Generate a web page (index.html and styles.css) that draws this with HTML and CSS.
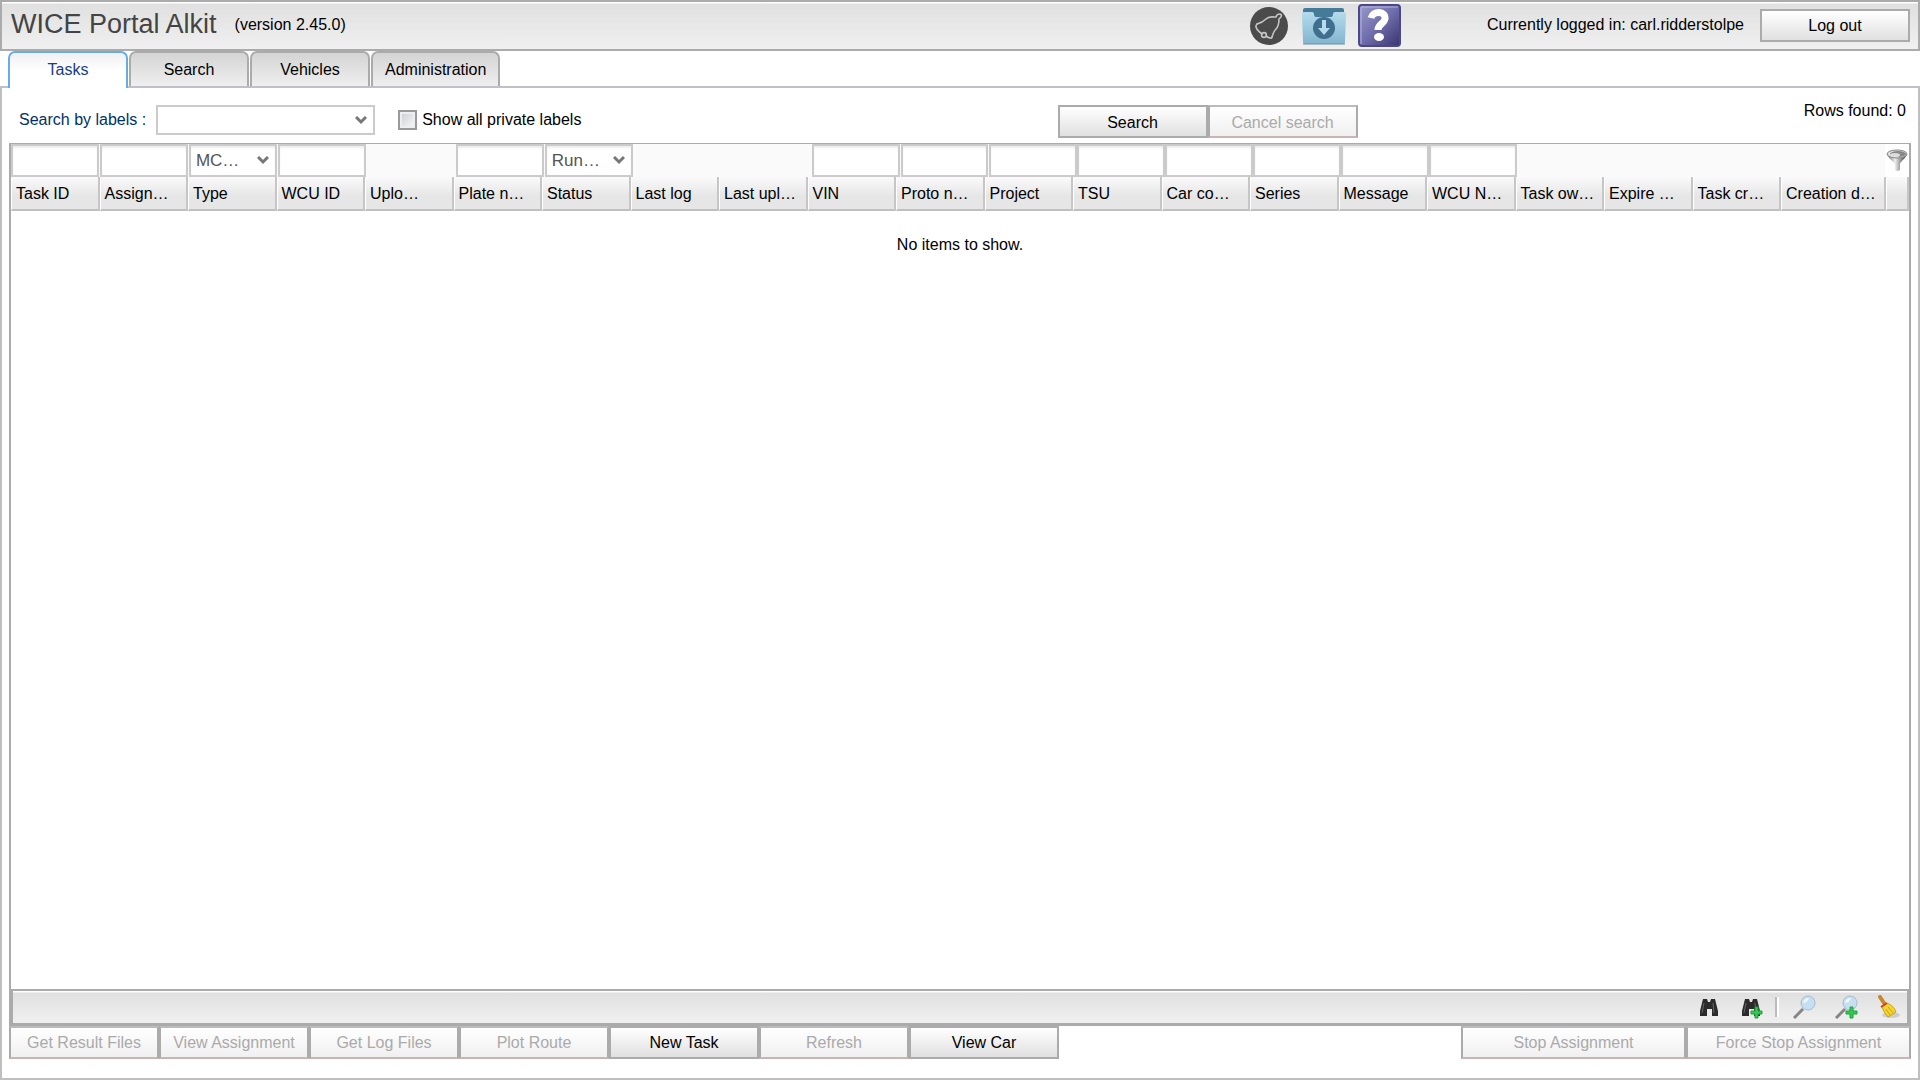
FILE: index.html
```html
<!DOCTYPE html>
<html lang="en">
<head>
<meta charset="UTF-8">
<meta name="viewport" content="width=device-width, initial-scale=1.0">
<title>WICE Portal Alkit</title>
<link rel="stylesheet" href="styles.css">
</head>
<body>

<header class="topbar">
  <h1 class="title">WICE Portal Alkit</h1>
  <span class="version">(version 2.45.0)</span>
  <div class="tools">
    <button class="tool" aria-label="Notifications">
      <svg width="38" height="38" viewBox="0 0 38 38">
        <circle cx="19" cy="19" r="19" fill="#4b4b4b"/>
        <g fill="none" stroke="#c4c4c4" stroke-width="1.6" stroke-linejoin="round" stroke-linecap="round">
          <path d="M7 17 C11 16 13 15 16 12 C19 9 23 10 26 10 C27 6 33 6 31 10 L29 12 C29 16 29 19 26 22 C23 25 23 27 22 30"/>
          <path d="M7 17 C4 20 8 24 12 27 M16 29 C19 31 22 32 22 30"/>
          <circle cx="14" cy="28" r="2.4"/>
        </g>
      </svg>
    </button>
    <button class="tool" aria-label="Downloads">
      <svg width="46" height="40" viewBox="0 0 46 40">
        <defs>
          <linearGradient id="folder" x1="0" y1="0" x2="0" y2="1">
            <stop offset="0" stop-color="#b4dbed"/>
            <stop offset="1" stop-color="#82b5ce"/>
          </linearGradient>
        </defs>
        <path d="M3 4 Q3 2 5 2 H42 Q44 2 44 4 V14 H3Z" fill="#457a99"/>
        <path d="M2 8 Q2 6 4 6 H12 Q14 6 14 8 Q14 11 16 11 H31 Q33 11 33 8 Q33 6 35 6 H44 Q46 6 46 8 L45 36 Q45 38 43 38 H5 Q3 38 3 36Z" fill="url(#folder)"/>
        <path d="M3 38 H45" stroke="#6a8fa3"/>
        <circle cx="24" cy="22" r="11" fill="#3f6f8d"/>
        <path d="M22 14 H26 V22 H30 L24 29 L18 22 H22Z" fill="#b5dcee"/>
      </svg>
    </button>
    <button class="tool" aria-label="Help">
      <svg width="44" height="44" viewBox="0 0 44 44">
        <defs>
          <linearGradient id="help" x1="0" y1="0" x2="1" y2="1">
            <stop offset="0" stop-color="#9a9acb"/>
            <stop offset=".5" stop-color="#6f6dab"/>
            <stop offset="1" stop-color="#38346f"/>
          </linearGradient>
        </defs>
        <rect x="1" y="1" width="41" height="41" rx="3" fill="url(#help)" stroke="#4c4787" stroke-width="2"/>
        <path d="M3 40 V3 H40" fill="none" stroke="#b4b4dc"/>
        <path d="M13 14 C15 6 28 7 27 15 C26 20 20 20 20 26" fill="none" stroke="#fff" stroke-width="7"/>
        <ellipse cx="21" cy="33" rx="5" ry="4" fill="#fff"/>
      </svg>
    </button>
  </div>
  <span class="user">Currently logged in: carl.ridderstolpe</span>
  <button class="btn logout">Log out</button>
</header>

<nav class="tabs">
  <button class="tab selected">Tasks</button>
  <button class="tab">Search</button>
  <button class="tab">Vehicles</button>
  <button class="tab">Administration</button>
</nav>

<main class="pane">
  <form class="search" onsubmit="return false">
    <label class="search-label" for="labels">Search by labels :</label>
    <select class="select labels" id="labels"><option></option></select>
    <input class="check" type="checkbox" id="private">
    <label for="private">Show all private labels</label>
    <div class="search-buttons">
      <button class="btn">Search</button><button class="btn" disabled>Cancel search</button>
    </div>
    <span class="rows">Rows found: 0</span>
  </form>

  <div class="list">
    <table class="grid">
      <thead>
        <tr class="filters">
          <td><input class="filter" aria-label="Task ID"></td>
          <td><input class="filter" aria-label="Assignment"></td>
          <td><select class="select filter" aria-label="Type"><option>MC…</option></select></td>
          <td><input class="filter" aria-label="WCU ID"></td>
          <td></td>
          <td><input class="filter" aria-label="Plate number"></td>
          <td><select class="select filter" aria-label="Status"><option>Run…</option></select></td>
          <td></td>
          <td></td>
          <td><input class="filter" aria-label="VIN"></td>
          <td><input class="filter" aria-label="Proto number"></td>
          <td><input class="filter" aria-label="Project"></td>
          <td><input class="filter" aria-label="TSU"></td>
          <td><input class="filter" aria-label="Car config"></td>
          <td><input class="filter" aria-label="Series"></td>
          <td><input class="filter" aria-label="Message"></td>
          <td><input class="filter" aria-label="WCU Name"></td>
          <td></td>
          <td></td>
          <td></td>
          <td></td>
          <td class="filter-cell">
            <button class="tool" aria-label="Filter">
              <svg width="22" height="24" viewBox="0 0 22 24">
                <defs>
                  <linearGradient id="funnel">
                    <stop offset="0" stop-color="#666"/>
                    <stop offset=".4" stop-color="#eee"/>
                    <stop offset="1" stop-color="#333"/>
                  </linearGradient>
                </defs>
                <path d="M1 5 C2 9 7 12 9 15 V21 Q11 23 14 21 V15 C15 12 20 9 21 5Z" fill="url(#funnel)"/>
                <ellipse cx="11" cy="5" rx="10" ry="4" fill="#ddd" stroke="#888"/>
                <ellipse cx="12" cy="5" rx="8" ry="3" fill="#888"/>
                <ellipse cx="9" cy="6" rx="5" ry="2" fill="#ddd"/>
              </svg>
            </button>
          </td>
        </tr>
        <tr class="headers">
          <th>Task ID</th>
          <th>Assign…</th>
          <th>Type</th>
          <th>WCU ID</th>
          <th>Uplo…</th>
          <th>Plate n…</th>
          <th>Status</th>
          <th>Last log</th>
          <th>Last upl…</th>
          <th>VIN</th>
          <th>Proto n…</th>
          <th>Project</th>
          <th>TSU</th>
          <th>Car co…</th>
          <th>Series</th>
          <th>Message</th>
          <th>WCU N…</th>
          <th>Task ow…</th>
          <th>Expire …</th>
          <th>Task cr…</th>
          <th>Creation d…</th>
          <th></th>
        </tr>
      </thead>
      <tbody>
        <tr><td class="empty">No items to show.</td></tr>
      </tbody>
    </table>

    <div class="strip">
      <button class="tool" aria-label="Find">
        <svg width="24" height="24" viewBox="0 0 24 24">
          <g id="binoculars">
            <path d="M5 4 H9 L10 7 H12 L13 4 H17 L18 8 L20 16 V21 H14 V14 H9 V21 H2 V16 L4 8Z" fill="#2b2b2b"/>
            <path d="M6 8 L4 18 M15 8 L16 18" stroke="#666"/>
          </g>
        </svg>
      </button>
      <button class="tool" aria-label="Find and add">
        <svg width="24" height="24" viewBox="0 0 24 24">
          <use href="#binoculars"/>
          <path id="plus" d="M15 12 H18 V16 H22 V19 H18 V23 H15 V19 H11 V16 H15Z" fill="#35c653" stroke="#1fa53b"/>
        </svg>
      </button>
      <span class="separator"></span>
      <button class="tool" aria-label="Zoom">
        <svg width="24" height="24" viewBox="0 0 24 24">
          <g id="lens">
            <path d="M1 23 L10 14" stroke="#858585" stroke-width="3"/>
            <circle cx="15" cy="8" r="7" fill="#c6dff3" stroke="#a6bccd"/>
            <path d="M10 8 Q11 3 16 3 Q14 8 10 8Z" fill="#f2f8fd"/>
          </g>
        </svg>
      </button>
      <button class="tool" aria-label="Zoom and add">
        <svg width="24" height="24" viewBox="0 0 24 24">
          <use href="#lens"/>
          <use href="#plus"/>
        </svg>
      </button>
      <button class="tool" aria-label="Clear">
        <svg width="24" height="24" viewBox="0 0 24 24">
          <ellipse cx="14" cy="20" rx="9" ry="3" fill="#ccc"/>
          <path d="M3 2 L7 8" stroke="#c58a2c" stroke-width="4" stroke-linecap="round"/>
          <path d="M5 12 L10 8 Q17 11 19 17 L11 22 Q7 18 5 12Z" fill="#f3d62c" stroke="#c9a218"/>
          <path d="M9 14 L13 20 M11 12 L16 18" stroke="#c9a218"/>
          <path d="M4 12 L10 8" stroke="#d2401f" stroke-width="2"/>
        </svg>
      </button>
    </div>
  </div>

  <div class="actions">
    <button class="btn" disabled>Get Result Files</button>
    <button class="btn" disabled>View Assignment</button>
    <button class="btn" disabled>Get Log Files</button>
    <button class="btn" disabled>Plot Route</button>
    <button class="btn">New Task</button>
    <button class="btn" disabled>Refresh</button>
    <button class="btn">View Car</button>
    <span class="spacer"></span>
    <button class="btn wide" disabled>Stop Assignment</button>
    <button class="btn wide" disabled>Force Stop Assignment</button>
  </div>
</main>

</body>
</html>
```
FILE: styles.css
```css
* {
  box-sizing: border-box;
}
body {
  margin: 0;
  height: 100vh;
  display: flex;
  flex-direction: column;
  font-family: Arial, "Liberation Sans", sans-serif;
  font-size: 16px;
  color: #000;
  background: #fff;
}
button, input, select {
  font: inherit;
  margin: 0;
}
svg {
  display: block;
}

/* top bar */
.topbar {
  display: flex;
  align-items: center;
  height: 51px;
  padding: 0 8px 0 9px;
  border: 2px solid #ababab;
  background: linear-gradient(#fff 1px, #e0e0e0 2px, #f0f0f0);
}
.title {
  margin: 0 18px 2px 0;
  font-size: 27px;
  font-weight: normal;
  color: #444;
}
.version {
  flex: 1;
}
.version, .user {
  padding-bottom: 2px;
}
.tools {
  display: flex;
  align-items: center;
  gap: 12px;
  margin-right: 85px;
}
.tool {
  padding: 0;
  border: 0;
  background: none;
}
.user {
  margin-right: 16px;
}
.btn {
  width: 150px;
  height: 33px;
  padding: 1px 0 0;
  border: 2px solid #ababab;
  background: linear-gradient(#fff, #e0e0e0);
  color: #000;
}
.btn:disabled {
  border-color: #bbb #ababab #c9b5b5;
  background: linear-gradient(#fff, #f0f0f0);
  color: #aaa;
}

/* tabs */
.tabs {
  display: flex;
  gap: 1px;
  height: 35px;
  padding-left: 8px;
}
.tab {
  min-width: 120px;
  padding: 0 12px;
  border: 2px solid #ababab;
  border-bottom: 0;
  border-radius: 7px 7px 0 0;
  background: linear-gradient(#d4d4d4, #efefef);
  color: #000;
}
.tab.selected {
  margin-bottom: -2px;
  padding-bottom: 2px;
  border-color: #66ade8;
  background: linear-gradient(#f0f0f0, #fff 50%);
  color: #1a3a8a;
  z-index: 1;
}

/* pane */
.pane {
  flex: 1;
  display: flex;
  flex-direction: column;
  padding: 0 7px 19px;
  border: 2px solid #bfbfbf;
  border-top-color: #c0c0c8;
}
.search {
  display: flex;
  align-items: flex-start;
  height: 55px;
  padding: 17px 5px 0 10px;
  line-height: 30px;
}
.search-label {
  margin-right: 10px;
  color: #003168;
}
.select {
  appearance: none;
  padding: 0 5px;
  border: 2px solid #cbcbcb;
  border-radius: 0;
  color: #555;
  background: #fff url("data:image/svg+xml,%3Csvg xmlns='http://www.w3.org/2000/svg' width='12' height='9'%3E%3Cpath d='M1 1L6 6L11 1' fill='none' stroke='%23777' stroke-width='3'/%3E%3C/svg%3E") no-repeat right 6px center;
}
.labels {
  width: 219px;
  height: 30px;
  margin-right: 23px;
}
.check {
  appearance: none;
  width: 19px;
  height: 20px;
  margin: 5px 5px 0 0;
  border: 2px solid #999;
  background: linear-gradient(135deg, #c8ccd2, #fafafa);
  box-shadow: inset 0 0 0 2px #eee;
}
.search-buttons {
  display: flex;
  flex: 1;
  justify-content: center;
  padding-left: 30px;
}
.rows {
  line-height: 12px;
}

/* list grid */
.list {
  flex: 1;
  display: flex;
  flex-direction: column;
  border: 2px solid #ababab;
  border-top-width: 1px;
}
.grid, .grid thead, .grid tbody {
  display: block;
}
.grid {
  flex: 1;
}
.filters, .headers {
  display: grid;
}
.filters {
  grid-template-columns: repeat(11, 89fr) repeat(9, 88fr) 104fr 24px;
  height: 33px;
  background: #fafafa;
}
.filters td {
  display: flex;
  min-width: 0;
  padding: 0;
}
.filters td:nth-child(-n+11) {
  padding-right: 1px;
}
.filters .filter-cell {
  align-items: center;
  justify-content: center;
  background: #fff;
}
.filter {
  width: 100%;
  height: 33px;
  border: 2px solid #cbcbcb;
  box-shadow: inset 0 2px 2px #eee;
  font-size: 17px;
}
.headers {
  grid-template-columns: repeat(20, 1fr) 105px 23px;
  height: 34px;
}
.headers th {
  min-width: 0;
  padding: 0 4px;
  overflow: hidden;
  border-left: 1px solid #fff;
  border-right: 2px solid #c6c6c6;
  border-bottom: 2px solid #c0c0c0;
  background: linear-gradient(#fafafa, #e6e6e6 60%);
  font-weight: normal;
  line-height: 34px;
  text-align: left;
  white-space: nowrap;
}
.grid tbody tr {
  display: flex;
  justify-content: center;
}
.empty {
  padding: 25px 0;
}
.strip {
  display: flex;
  align-items: center;
  justify-content: flex-end;
  gap: 18px;
  height: 35px;
  padding-right: 6px;
  border: 2px solid #ababab;
  border-bottom-width: 1px;
  background: linear-gradient(#fff 1px, #e0e0e0 2px, #f0f0f0);
}
.separator {
  width: 4px;
  height: 20px;
  margin: 0 -4px 0 -7px;
  border-left: 2px solid #bbb;
  border-right: 2px solid #fff;
}
.actions {
  display: flex;
}
.spacer {
  flex: 1;
}
.wide {
  width: 225px;
}
```
